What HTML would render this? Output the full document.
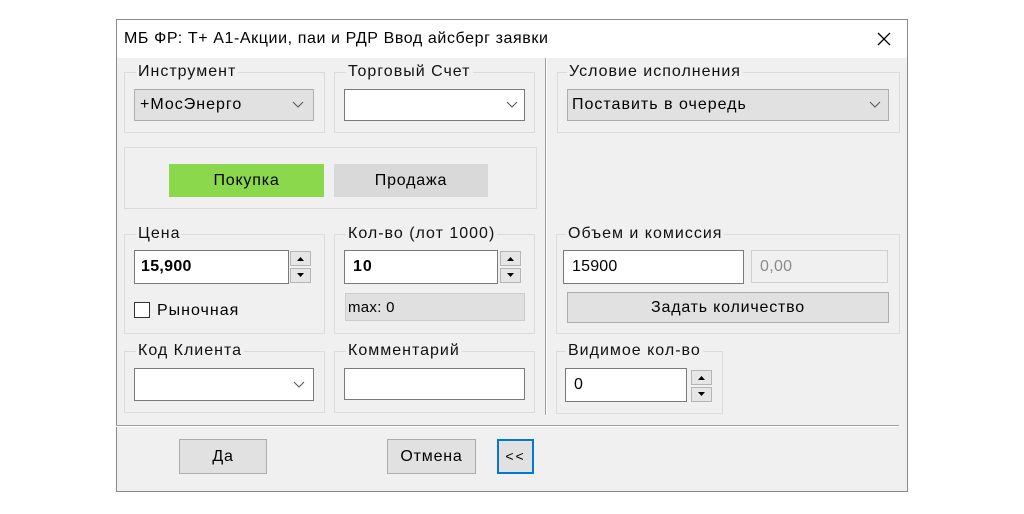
<!DOCTYPE html>
<html><head><meta charset="utf-8"><style>
body{margin:0;width:1024px;height:514px;background:#fff;position:relative;overflow:hidden;font-family:"Liberation Sans","DejaVu Sans",sans-serif;font-size:16px;letter-spacing:0.8px;color:#000}
.a{position:absolute;box-sizing:border-box}
.win{left:116px;top:19px;width:792px;height:473px;border:1px solid #8a8a8a;background:#f0f0f0}
.title{left:117px;top:20px;width:790px;height:38px;background:#fff}
.g{border:1px solid #dcdcdc}
.lbl{background:#f0f0f0;padding:0 2px;font-size:16px;line-height:16px;color:#111;letter-spacing:1px}
.cb{background:#e1e1e1;border:1px solid #adadad}
.wb{background:#fff;border:1px solid #7a7a7a}
.txt{font-size:16px;line-height:16px;letter-spacing:1px}
.sp{background:#e6e6e6;border:1px solid #b5b5b5;width:21px;height:15px}
.btn{background:#e1e1e1;border:1px solid #adadad;text-align:center;font-size:16px}
</style></head><body>
<div class="a win"></div>
<div class="a title"></div>
<div class="a" style="left:124px;top:30px;font-size:16px;letter-spacing:0.6px">МБ ФР: Т+ А1-Акции, паи и РДР Ввод айсберг заявки</div>
<svg class="a" style="left:876px;top:31px" width="16" height="16"><path d="M2 2L14 14M14 2L2 14" stroke="#000" stroke-width="1.3"/></svg>
<div class="a" style="left:545px;top:58px;width:1px;height:357px;background:#a0a0a0"></div>
<div class="a" style="left:546px;top:58px;width:1px;height:357px;background:#fff"></div>
<div class="a" style="left:116px;top:425px;width:783px;height:1px;background:#a0a0a0"></div>
<div class="a" style="left:116px;top:426px;width:783px;height:1px;background:#fff"></div>

<div class="a g" style="left:124px;top:72px;width:201px;height:61px"></div>
<div class="a lbl" style="left:136px;top:64px">Инструмент</div>
<div class="a cb" style="left:134px;top:89px;width:180px;height:32px"></div>
<div class="a txt" style="left:140px;top:97px">+МосЭнерго</div>
<svg class="a" style="left:292px;top:101px" width="12" height="8"><path d="M1 1L6 6L11 1" stroke="#555" fill="none"/></svg>

<div class="a g" style="left:334px;top:72px;width:201px;height:61px"></div>
<div class="a lbl" style="left:346px;top:64px">Торговый Счет</div>
<div class="a wb" style="left:344px;top:89px;width:181px;height:32px"></div>
<svg class="a" style="left:506px;top:101px" width="12" height="8"><path d="M1 1L6 6L11 1" stroke="#555" fill="none"/></svg>

<div class="a g" style="left:557px;top:72px;width:343px;height:61px"></div>
<div class="a lbl" style="left:567px;top:64px">Условие исполнения</div>
<div class="a cb" style="left:567px;top:89px;width:322px;height:32px"></div>
<div class="a txt" style="left:572px;top:97px">Поставить в очередь</div>
<svg class="a" style="left:869px;top:101px" width="12" height="8"><path d="M1 1L6 6L11 1" stroke="#555" fill="none"/></svg>

<div class="a g" style="left:124px;top:147px;width:413px;height:62px"></div>
<div class="a" style="left:169px;top:164px;width:155px;height:33px;background:#8cd84c;text-align:center;line-height:33px">Покупка</div>
<div class="a" style="left:334px;top:164px;width:154px;height:33px;background:#d9d9d9;text-align:center;line-height:33px">Продажа</div>

<div class="a g" style="left:124px;top:234px;width:201px;height:100px"></div>
<div class="a lbl" style="left:136px;top:226px">Цена</div>
<div class="a wb" style="left:134px;top:250px;width:155px;height:34px"></div>
<div class="a txt" style="left:141px;top:259px;font-weight:bold;letter-spacing:0.3px">15,900</div>
<div class="a sp" style="left:290px;top:251px"></div><div class="a sp" style="left:290px;top:268px"></div>
<svg class="a" style="left:290px;top:251px" width="21" height="32"><path d="M7 10L14 10L10.5 6Z M7 22L14 22L10.5 26Z" fill="#000"/></svg>
<div class="a" style="left:134px;top:302px;width:16px;height:16px;border:1px solid #333;background:#fff"></div>
<div class="a txt" style="left:157px;top:303px">Рыночная</div>

<div class="a g" style="left:334px;top:234px;width:201px;height:100px"></div>
<div class="a lbl" style="left:346px;top:226px">Кол-во (лот 1000)</div>
<div class="a wb" style="left:344px;top:250px;width:154px;height:34px"></div>
<div class="a txt" style="left:353px;top:259px;font-weight:bold">10</div>
<div class="a sp" style="left:500px;top:251px"></div><div class="a sp" style="left:500px;top:268px"></div>
<svg class="a" style="left:500px;top:251px" width="21" height="32"><path d="M7 10L14 10L10.5 6Z M7 22L14 22L10.5 26Z" fill="#000"/></svg>
<div class="a" style="left:345px;top:293px;width:180px;height:28px;background:#e0e0e0;border:1px solid #ccc"></div>
<div class="a" style="left:348px;top:299px;font-size:15px;letter-spacing:0.3px">max: 0</div>

<div class="a g" style="left:124px;top:351px;width:201px;height:62px"></div>
<div class="a lbl" style="left:136px;top:343px">Код Клиента</div>
<div class="a wb" style="left:134px;top:368px;width:180px;height:33px"></div>
<svg class="a" style="left:293px;top:381px" width="12" height="8"><path d="M1 1L6 6L11 1" stroke="#555" fill="none"/></svg>

<div class="a g" style="left:334px;top:351px;width:201px;height:62px"></div>
<div class="a lbl" style="left:346px;top:343px">Комментарий</div>
<div class="a wb" style="left:344px;top:368px;width:181px;height:32px"></div>

<div class="a g" style="left:556px;top:234px;width:344px;height:100px"></div>
<div class="a lbl" style="left:566px;top:226px">Объем и комиссия</div>
<div class="a wb" style="left:563px;top:250px;width:181px;height:34px"></div>
<div class="a txt" style="left:572px;top:259px;letter-spacing:0.2px">15900</div>
<div class="a" style="left:751px;top:250px;width:137px;height:33px;border:1px solid #cfcfcf;background:#f0f0f0"></div>
<div class="a txt" style="left:760px;top:259px;color:#8a8a8a;letter-spacing:0.3px">0,00</div>
<div class="a btn" style="left:567px;top:292px;width:322px;height:31px;line-height:29px">Задать количество</div>

<div class="a g" style="left:556px;top:351px;width:167px;height:63px"></div>
<div class="a lbl" style="left:566px;top:343px">Видимое кол-во</div>
<div class="a wb" style="left:565px;top:368px;width:122px;height:34px"></div>
<div class="a txt" style="left:574px;top:377px">0</div>
<div class="a sp" style="left:691px;top:370px"></div><div class="a sp" style="left:691px;top:387px"></div>
<svg class="a" style="left:691px;top:370px" width="21" height="32"><path d="M7 10L14 10L10.5 6Z M7 22L14 22L10.5 26Z" fill="#000"/></svg>

<div class="a btn" style="left:179px;top:439px;width:88px;height:35px;line-height:33px">Да</div>
<div class="a btn" style="left:387px;top:439px;width:89px;height:35px;line-height:33px">Отмена</div>
<div class="a btn" style="left:497px;top:439px;width:37px;height:35px;line-height:31px;border:2px solid #0078d7;font-size:14px;letter-spacing:2px">&lt;&lt;</div>
</body></html>
